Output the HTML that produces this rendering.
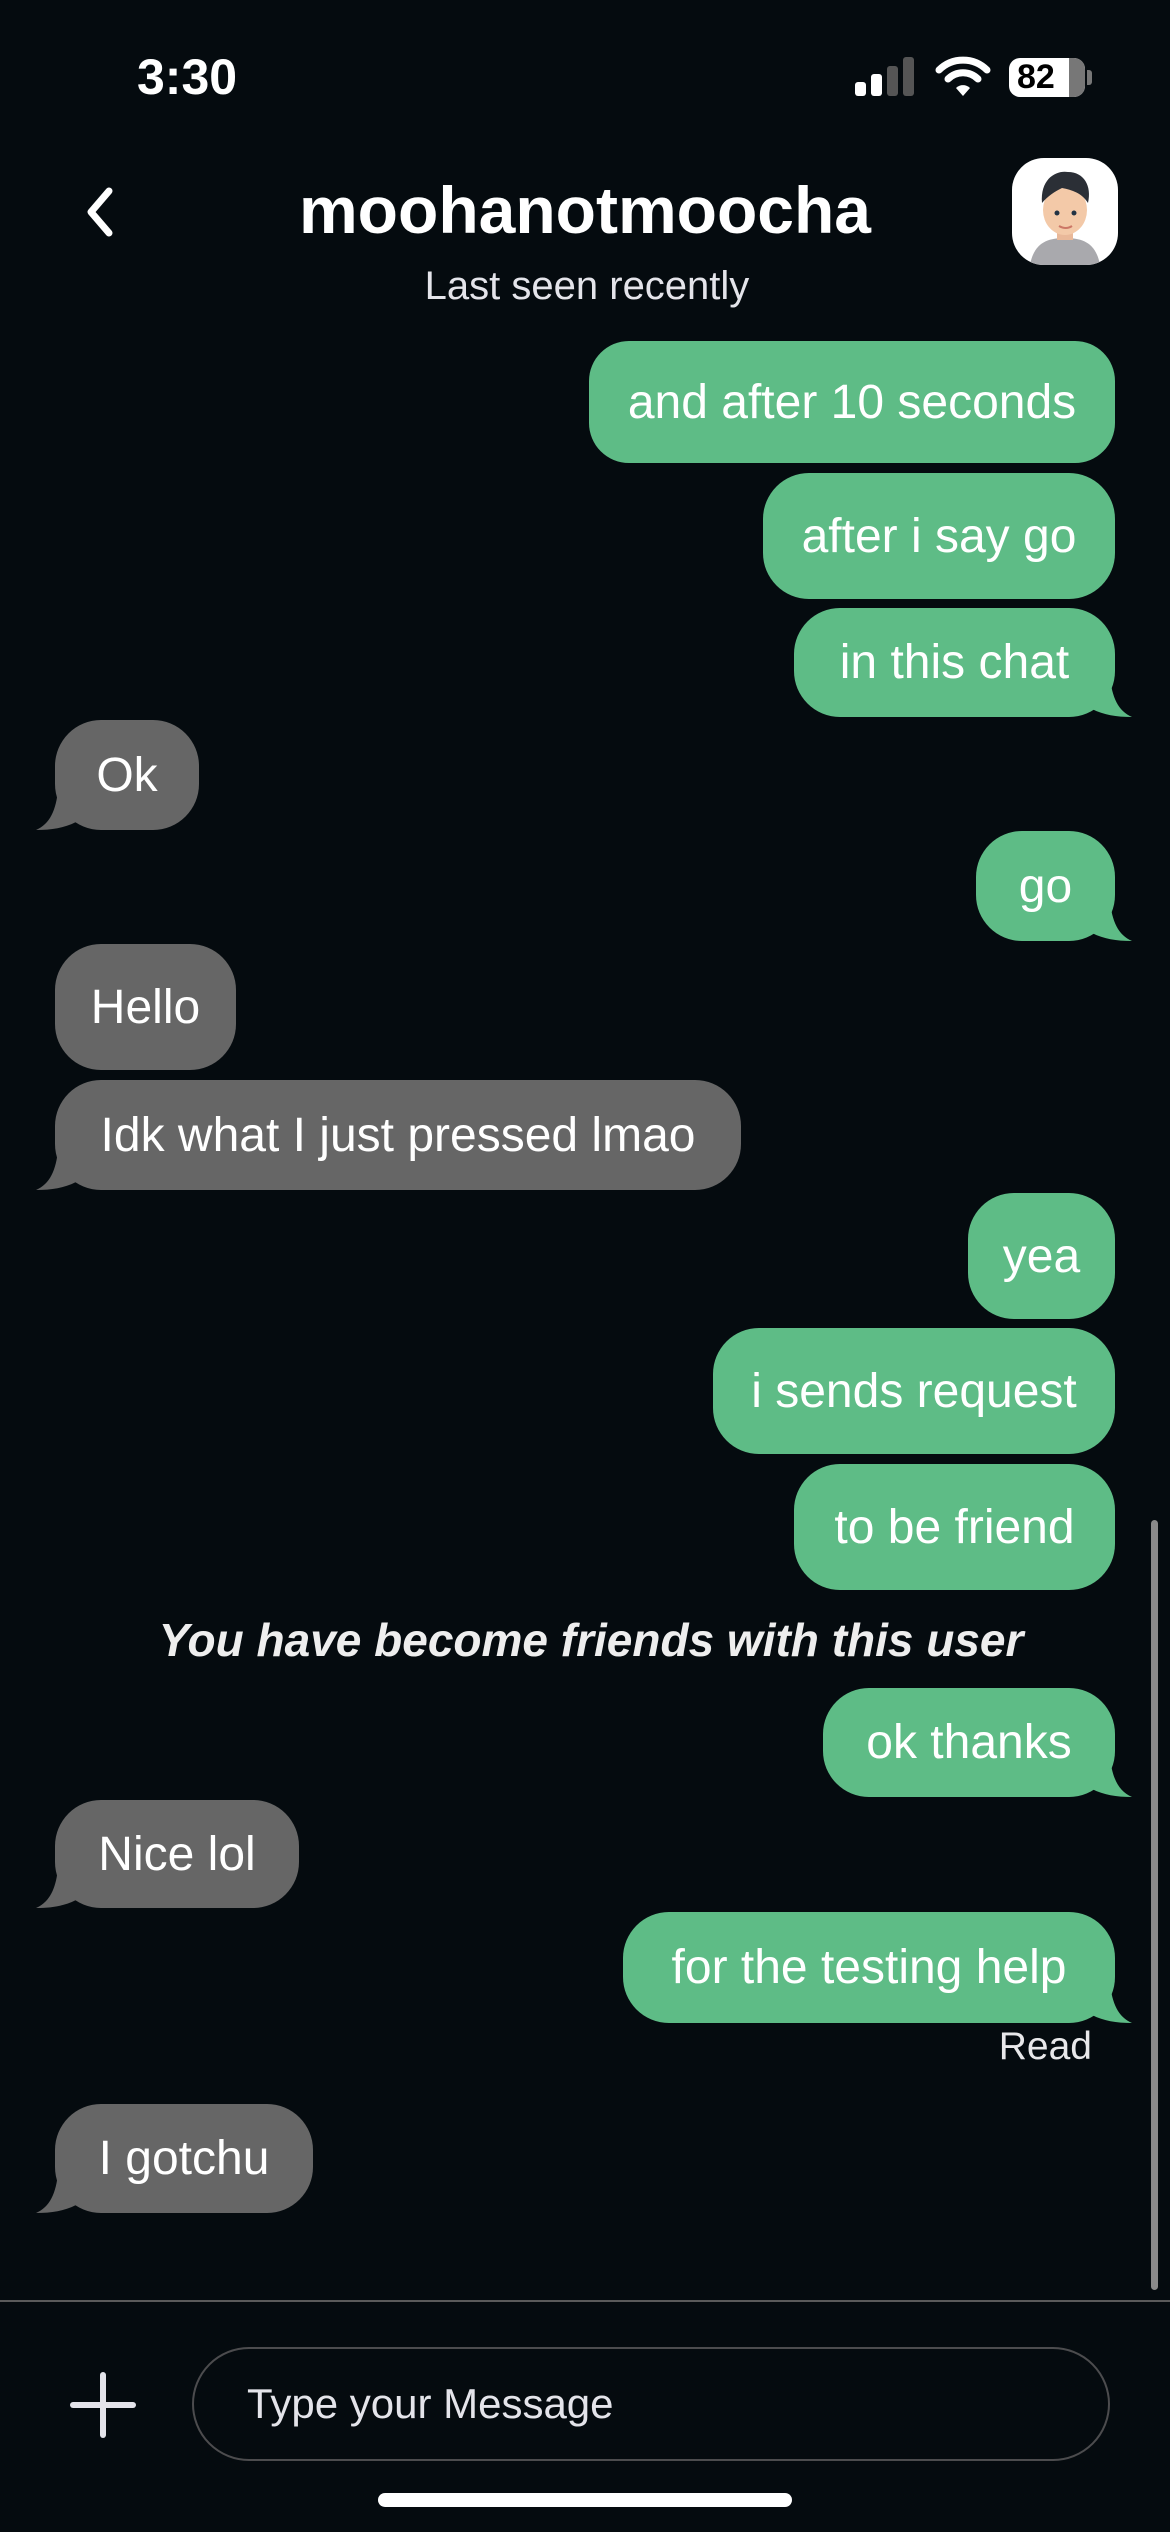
<!DOCTYPE html>
<html><head><meta charset="utf-8"><style>
*{margin:0;padding:0;box-sizing:border-box}
body{width:1170px;height:2532px;background:#050b0f;position:relative;overflow:hidden;font-family:"Liberation Sans",sans-serif;color:#fff}
.a{position:absolute}
.b{position:absolute;height:110px;border-radius:46px;display:flex;align-items:center;justify-content:center;font-size:48px;color:#fff;white-space:nowrap}
.g{background:#5ebc86}
.k{background:#666666}
.t{position:absolute;width:40px;height:40px}
</style></head><body>
<div class="a" style="left:137px;top:48px;font-size:50px;font-weight:bold;">3:30</div>
<div class="a" style="left:855px;top:82px;width:11px;height:14px;background:#fff;border-radius:3px"></div>
<div class="a" style="left:871px;top:74px;width:11px;height:22px;background:#fff;border-radius:3px"></div>
<div class="a" style="left:887px;top:66px;width:11px;height:30px;background:#555;border-radius:3px"></div>
<div class="a" style="left:903px;top:57px;width:11px;height:39px;background:#555;border-radius:3px"></div>
<svg class="a" style="left:935px;top:56px" width="56" height="42" viewBox="0 0 56 42"><path d="M4 14 A34 34 0 0 1 52 14" stroke="#fff" stroke-width="7" fill="none" stroke-linecap="round"/><path d="M13 23 A21 21 0 0 1 43 23" stroke="#fff" stroke-width="7" fill="none" stroke-linecap="round"/><path d="M21 32 L28 40 L35 32 A10 10 0 0 0 21 32Z" fill="#fff"/></svg>
<div class="a" style="left:1009px;top:58px;width:76px;height:39px;background:#fff;border-radius:11px;color:#000;font-weight:bold;font-size:34px;line-height:39px;padding-left:8px;overflow:hidden"><span>82</span><div class="a" style="left:60px;top:0;width:16px;height:39px;background:#777"></div></div>
<div class="a" style="left:1087px;top:70px;width:5px;height:15px;background:#777;border-radius:0 3px 3px 0"></div>
<svg class="a" style="left:82px;top:186px" width="36" height="52" viewBox="0 0 36 52"><path d="M27 5 L9 26 L27 47" stroke="#fff" stroke-width="7" fill="none" stroke-linecap="round" stroke-linejoin="round"/></svg>
<div class="a" style="left:0;width:1170px;text-align:center;top:172px;font-size:66px;font-weight:bold;">moohanotmoocha</div>
<div class="a" style="left:0;width:1170px;text-align:center;top:264px;font-size:40px;color:#e4e4ea;padding-left:4px">Last seen recently</div>
<div class="a" style="left:1012px;top:158px;width:106px;height:107px;background:#fff;border-radius:32px;overflow:hidden">
<svg width="106" height="107" viewBox="0 0 106 107"><path d="M18 107 C22 85 35 80 53 80 C71 80 84 85 88 107Z" fill="#a9a9ad"/><rect x="45" y="66" width="16" height="16" fill="#e9b899"/><ellipse cx="53" cy="52" rx="22" ry="25" fill="#f3c9a8"/><path d="M30 45 C28 20 45 12 56 14 C72 14 80 28 76 45 C70 35 60 32 50 30 C42 34 36 38 30 45Z" fill="#2b2f36"/><circle cx="45" cy="55" r="2.5" fill="#234"/><circle cx="62" cy="55" r="2.5" fill="#234"/><path d="M47 68 Q54 72 60 68" stroke="#c76" stroke-width="2" fill="none"/></svg></div>

<div class="b g" style="left:589px;top:341px;width:526px;height:122px;border-radius:40px">and after 10 seconds</div>
<div class="b g" style="left:763px;top:473px;width:352px;height:126px">after i say go</div>
<div class="b g" style="left:794px;top:608px;width:321px;height:109px">in this chat</div>
<svg class="t" style="left:1092px;top:677px" viewBox="0 0 40 40"><path d="M0 0 L18 0 C20 20 26 34 40 40 C24 40 12 38 0 32Z" fill="#5ebc86"/></svg>

<div class="b k" style="left:55px;top:720px;width:144px;">Ok</div>
<svg class="t" style="left:36px;top:790px" viewBox="0 0 40 40"><path d="M40 0 L22 0 C20 20 14 34 0 40 C16 40 28 38 40 32Z" fill="#666"/></svg>

<div class="b g" style="left:976px;top:831px;width:139px;">go</div>
<svg class="t" style="left:1092px;top:901px" viewBox="0 0 40 40"><path d="M0 0 L18 0 C20 20 26 34 40 40 C24 40 12 38 0 32Z" fill="#5ebc86"/></svg>

<div class="b k" style="left:55px;top:944px;width:181px;height:126px">Hello</div>
<div class="b k" style="left:55px;top:1080px;width:686px;">Idk what I just pressed lmao</div>
<svg class="t" style="left:36px;top:1150px" viewBox="0 0 40 40"><path d="M40 0 L22 0 C20 20 14 34 0 40 C16 40 28 38 40 32Z" fill="#666"/></svg>

<div class="b g" style="left:968px;top:1193px;width:147px;height:126px">yea</div>
<div class="b g" style="left:713px;top:1328px;width:402px;height:126px">i sends request</div>
<div class="b g" style="left:794px;top:1464px;width:321px;height:126px">to be friend</div>

<div class="a" style="left:0;width:1182px;text-align:center;top:1613px;font-size:46px;font-weight:bold;font-style:italic;color:#eeeeee">You have become friends with this user</div>

<div class="b g" style="left:823px;top:1688px;width:292px;height:109px">ok thanks</div>
<svg class="t" style="left:1092px;top:1757px" viewBox="0 0 40 40"><path d="M0 0 L18 0 C20 20 26 34 40 40 C24 40 12 38 0 32Z" fill="#5ebc86"/></svg>

<div class="b k" style="left:55px;top:1800px;width:244px;height:108px">Nice lol</div>
<svg class="t" style="left:36px;top:1868px" viewBox="0 0 40 40"><path d="M40 0 L22 0 C20 20 14 34 0 40 C16 40 28 38 40 32Z" fill="#666"/></svg>

<div class="b g" style="left:623px;top:1912px;width:492px;height:111px">for the testing help</div>
<svg class="t" style="left:1092px;top:1983px" viewBox="0 0 40 40"><path d="M0 0 L18 0 C20 20 26 34 40 40 C24 40 12 38 0 32Z" fill="#5ebc86"/></svg>
<div class="a" style="right:78px;top:2025px;font-size:39px;color:#e8e8ea">Read</div>

<div class="b k" style="left:55px;top:2104px;width:258px;height:109px">I gotchu</div>
<svg class="t" style="left:36px;top:2173px" viewBox="0 0 40 40"><path d="M40 0 L22 0 C20 20 14 34 0 40 C16 40 28 38 40 32Z" fill="#666"/></svg>

<div class="a" style="left:1151px;top:1520px;width:7px;height:770px;background:#8a8a8a;border-radius:4px"></div>
<div class="a" style="left:0;top:2300px;width:1170px;height:2px;background:#5a5a5a"></div>
<div class="a" style="left:70px;top:2402px;width:66px;height:6px;background:#e4e4ea;border-radius:3px"></div>
<div class="a" style="left:100px;top:2372px;width:6px;height:66px;background:#e4e4ea;border-radius:3px"></div>
<div class="a" style="left:192px;top:2347px;width:918px;height:114px;border:2px solid #4c4c4e;border-radius:57px"></div>
<div class="a" style="left:247px;top:2380px;font-size:42px;color:#e4e4ea">Type your Message</div>
<div class="a" style="left:378px;top:2493px;width:414px;height:14px;background:#fff;border-radius:7px"></div>
</body></html>
